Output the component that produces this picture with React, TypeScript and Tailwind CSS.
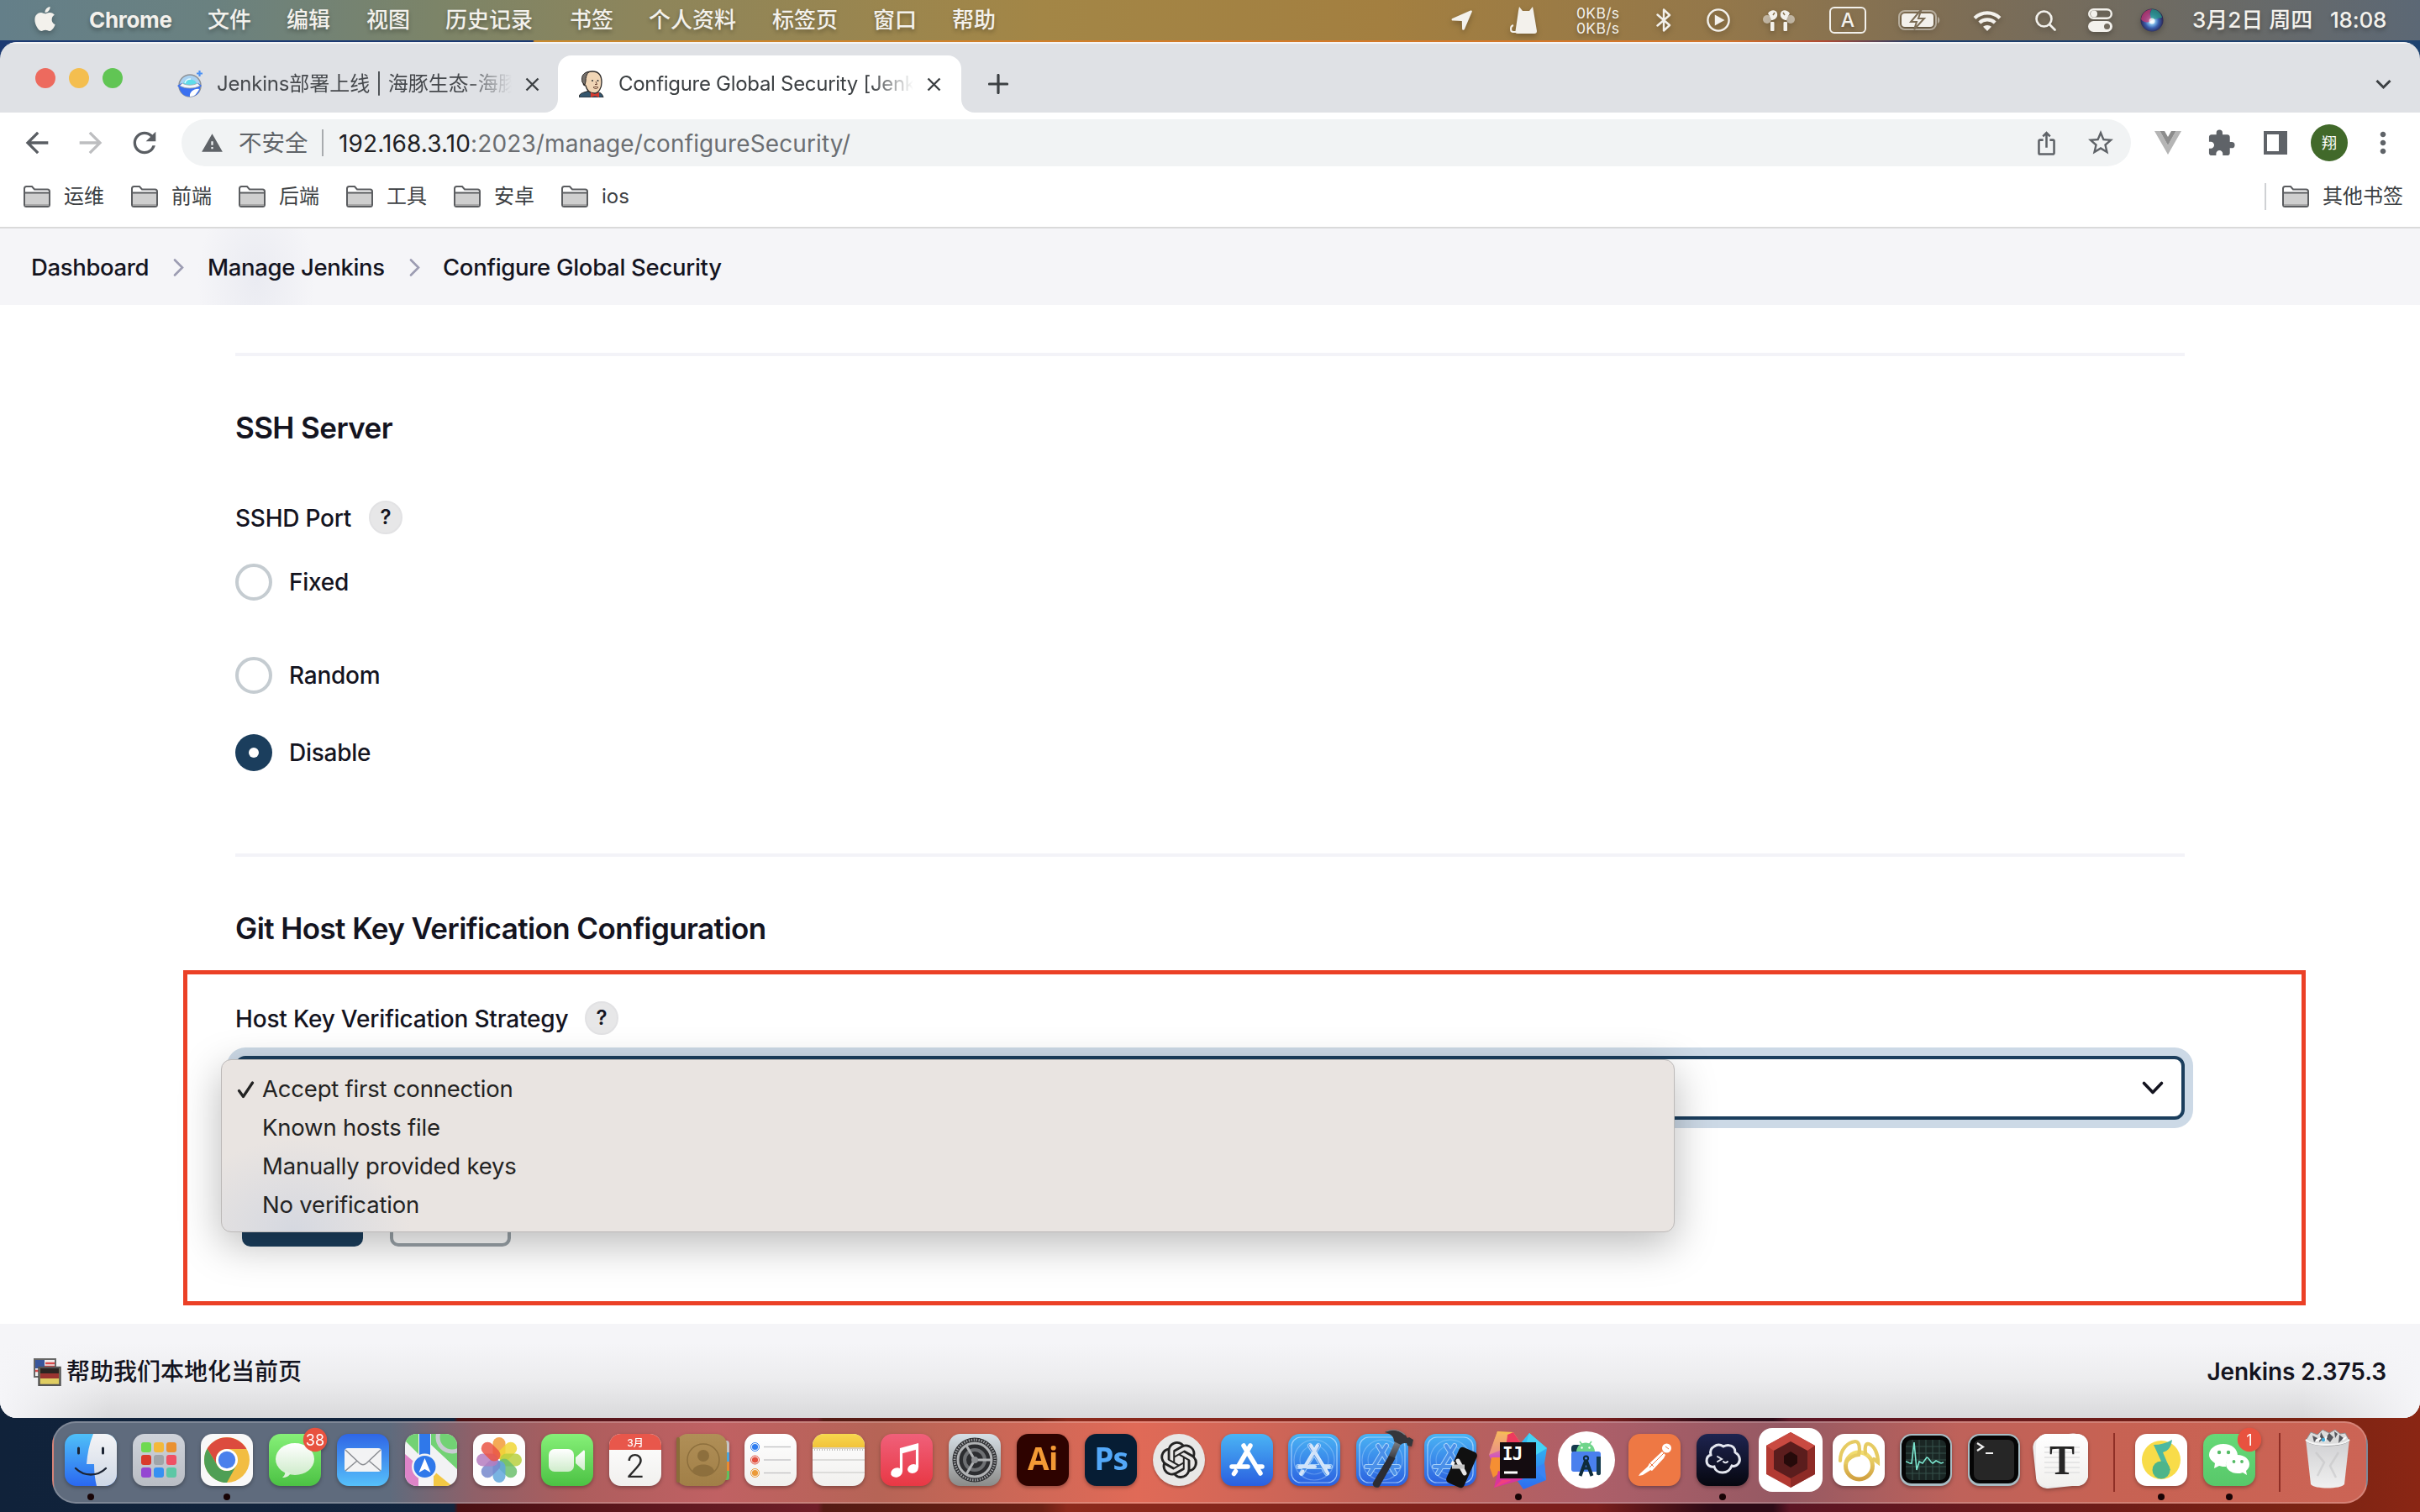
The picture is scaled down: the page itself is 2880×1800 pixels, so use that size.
import React from "react";
import { FaApple } from "react-icons/fa";
import { SiOpenai } from "react-icons/si";
import {
  MdArrowBack,
  MdArrowForward,
  MdExtension,
  MdIosShare,
  MdMoreVert,
  MdRefresh,
  MdStarBorder,
  MdWarning,
} from "react-icons/md";

/* ---------- macOS menu bar ---------- */

const MENUS = [
  { label: "文件", w: "w-[94px]" },
  { label: "编辑", w: "w-[95px]" },
  { label: "视图", w: "w-[94px]" },
  { label: "历史记录", w: "w-[148px]" },
  { label: "书签", w: "w-[94px]" },
  { label: "个人资料", w: "w-[147px]" },
  { label: "标签页", w: "w-[120px]" },
  { label: "窗口", w: "w-[94px]" },
  { label: "帮助", w: "w-[60px]" },
];

function MenuBar() {
  return (
    <div className="flex h-[48px] shrink-0 items-center bg-[linear-gradient(to_right,#647f89_0px,#6a8180_250px,#7c8468_520px,#8c855c_750px,#a38646_1240px,#a37f40_1650px,#93774a_2050px,#7c6d56_2350px,#6a6a66_2640px,#5c6875_2880px)] pl-[37px] pr-[38px] text-[26px] leading-[46px] text-[#f3f1ec] [text-shadow:0_3px_5px_rgba(0,0,0,0.3)]">
      <div className="flex w-[69px] shrink-0">
        <FaApple size={33} className="-mt-1 drop-shadow-[0_3px_3px_rgba(0,0,0,0.25)]" />
      </div>
      <div className="w-[141px] shrink-0 font-bold tracking-[-0.3px]">Chrome</div>
      {MENUS.map((m) => (
        <div key={m.label} className={`${m.w} shrink-0 whitespace-nowrap font-medium`}>
          {m.label}
        </div>
      ))}
      <div className="ml-auto flex items-center [&>svg]:shrink-0 [&>svg]:overflow-visible [&>svg]:drop-shadow-[0_3px_3px_rgba(0,0,0,0.25)]">
        <svg width="25" height="24" viewBox="0 0 25 24" fill="currentColor">
          <path d="M23 .6c1.200-.6 2.200.3 1.800 1.500L15.800 23c-.6 1.300-2.600 1-2.700-.5l-.3-9.600-10.800-.3c-1.600-.1-2-1.900-.6-2.600z" />
        </svg>
        <svg className="ml-[45px]" width="32" height="32" viewBox="0 0 32 32">
          <path d="M11 0l4 5h8l4-5 1 5 4 24c0 2-1 3-3 3H9c-2 0-3-1-2.500-3l3.500-24z" fill="currentColor" />
          <path d="M4 22c-4 1-4 8 0 8h6" stroke="currentColor" strokeWidth="2" fill="none" />
        </svg>
        <div className="ml-[47px] w-[50px] whitespace-nowrap pt-[2px] text-[17.500px] leading-[18px] tracking-[0.300px]">
          <div>0KB/s</div>
          <div>0KB/s</div>
        </div>
        <svg className="ml-[45px]" width="18" height="28" viewBox="0 0 18 28" fill="none" stroke="currentColor" strokeWidth="2.400" strokeLinejoin="round" strokeLinecap="round">
          <path d="M1.500 7.500L16 20 9 26.500V1.500L16 8 1.500 20.500" />
        </svg>
        <svg className="ml-[42px]" width="28" height="28" viewBox="0 0 28 28" fill="none" stroke="currentColor" strokeWidth="2.400">
          <circle cx="14" cy="14" r="12.600" />
          <path d="M11 9.500v9l8-4.500z" fill="currentColor" />
        </svg>
        <svg className="ml-[39px]" width="38" height="25" viewBox="0 0 38 25" fill="currentColor">
          <ellipse cx="5" cy="11" rx="5" ry="5" opacity=".55" />
          <ellipse cx="33" cy="11" rx="5" ry="5" opacity=".55" />
          <path d="M6 4c3-5 10-5 11 0 1 5-3 8-7 8-1-3-2-5-4-8zM32 4c-3-5-10-5-11 0-1 5 3 8 7 8 1-3 2-5 4-8z" />
          <rect x="9" y="14" width="4.500" height="11" rx="1" />
          <rect x="24.500" y="14" width="4.500" height="11" rx="1" />
          <path d="M12 6l2-3M26 6l-2-3" stroke="#8a7450" strokeWidth="1.500" />
        </svg>
        <div className="ml-[41px] flex h-[32px] w-[44px] items-center justify-center rounded-[6px] border-2 border-[#f3f1ec] text-[23px] font-medium leading-none">
          A
        </div>
        <svg className="ml-[38px]" width="50" height="24" viewBox="0 0 50 24">
          <rect x="1" y="1" width="44" height="22" rx="7" fill="none" stroke="currentColor" strokeWidth="2" opacity=".5" />
          <rect x="4" y="4" width="38" height="16" rx="4" fill="currentColor" />
          <path d="M47 8c3 1.500 3 6.500 0 8z" fill="currentColor" opacity=".5" />
          <path d="M26 1L15 14h7l-3 9 12-13h-7l3-9z" fill="currentColor" stroke="#7c6d56" strokeWidth="2" />
        </svg>
        <svg className="ml-[39px]" width="34" height="25" viewBox="0 0 34 25" fill="none" stroke="currentColor" strokeWidth="4.200">
          <path d="M2 9.500a21.500 21.500 0 0 1 30 0" />
          <path d="M7.800 15a13.500 13.500 0 0 1 18.400 0" />
          <path d="M17 25l-5-5.200a7.500 7.500 0 0 1 10 0z" fill="currentColor" stroke="none" />
        </svg>
        <svg className="ml-[40px]" width="25" height="25" viewBox="0 0 25 25" fill="none" stroke="currentColor" strokeWidth="2.600" strokeLinecap="round">
          <circle cx="10.500" cy="10.500" r="9" />
          <path d="M17.500 17.500l6 6" />
        </svg>
        <svg className="ml-[38px]" width="29" height="28" viewBox="0 0 29 28">
          <rect x="1.200" y="1.200" width="26.600" height="10.600" rx="5.300" fill="none" stroke="currentColor" strokeWidth="2.400" />
          <circle cx="7" cy="6.500" r="4" fill="currentColor" />
          <rect y="15" width="29" height="13" rx="6.500" fill="currentColor" />
          <circle cx="22.500" cy="21.500" r="3.500" fill="#736b5e" />
        </svg>
        <svg className="ml-[33px]" width="28" height="28" viewBox="0 0 28 28">
          <defs>
            <radialGradient id="siri" cx=".5" cy=".55">
              <stop offset="0" stopColor="#fff" />
              <stop offset=".3" stopColor="#7fb9e8" />
              <stop offset=".6" stopColor="#3a5fae" />
              <stop offset="1" stopColor="#2a2450" />
            </radialGradient>
          </defs>
          <circle cx="14" cy="14" r="13.500" fill="url(#siri)" />
          <path d="M1 13C2 5 8 1 14 1c-4 4-2 8 0 13-5 4-10 3-13-1z" fill="#c93a72" opacity=".75" />
          <path d="M14 1c6 0 11 4 12 10-4 1-8 1-12 3-2-5-3-9 0-13z" fill="#2a9c8a" opacity=".75" />
          <circle cx="14" cy="15" r="3.500" fill="#fff" opacity=".75" />
        </svg>
        <div className="ml-[34px] w-[146px] whitespace-nowrap text-[26px] font-medium">3月2日 周四</div>
        <div className="ml-[18px] w-[69px] whitespace-nowrap text-[26px] font-medium tracking-[-0.200px]">18:08</div>
      </div>
    </div>
  );
}

/* ---------- Chrome window ---------- */

function CloseX() {
  return (
    <svg width="17" height="17" viewBox="0 0 17 17" stroke="#3c4043" strokeWidth="2.400" className="shrink-0">
      <path d="M1.500 1.500l14 14M15.500 1.500l-14 14" />
    </svg>
  );
}

function TabStrip() {
  return (
    <div className="flex h-[84px] shrink-0 items-end border-t-2 border-[#f4f4f5] bg-[#dfe1e5]">
      <div className="flex h-full w-[211px] shrink-0 items-center gap-[16px] pl-[42px]">
        <div className="size-[24px] rounded-full bg-[#ed6a5e]" />
        <div className="size-[24px] rounded-full bg-[#f4be4f]" />
        <div className="size-[24px] rounded-full bg-[#61c554]" />
      </div>
      <div className="flex h-[68px] w-[453px] shrink-0 items-center">
        <svg width="31" height="32" viewBox="0 0 31 32" className="shrink-0">
          <circle cx="15" cy="18" r="13" fill="#a9d2f2" stroke="#8f9399" strokeWidth="1.500" />
          <path d="M6 17a9.500 9.500 0 0 1 18 0z" fill="#5fdcea" />
          <path d="M9 15c1-4 4-5 7-5" stroke="#e6fbff" strokeWidth="1.500" fill="none" />
          <path d="M0 18l5-3c2 3 6 4 10 4s8-1 10-4l4 3-2 2c0 7-5 11-12 11S4 27 2 20z" fill="#3b70f0" />
          <path d="M6 15l-3 3c6 4 18 4 24 0l-3-3c-5 3-13 3-18 0z" fill="#f4f7fa" stroke="#98a2ac" strokeWidth=".8" />
          <path d="M15 31c-1-5 5-10 11-9-1 3-2 3-3 5-2 3-5 4-8 4z" fill="#fff" />
          <path d="M26.500 0v7M23 3.500h7" stroke="#4d93f5" strokeWidth="2.200" />
        </svg>
        <div className="ml-[16px] w-[351px] shrink-0 overflow-hidden whitespace-nowrap text-[24px] text-[#46494d] [mask-image:linear-gradient(to_right,black_295px,transparent_351px)]">
          <span className="tracking-[-0.200px]">Jenkins</span>部署上线 | 海豚生态-海豚
        </div>
        <div className="ml-[16px] flex">
          <CloseX />
        </div>
      </div>
      <div className="relative flex h-[68px] w-[480px] shrink-0 items-center rounded-t-[16px] bg-white pl-[25px]">
        <svg className="absolute bottom-0 -left-[16px]" width="16" height="16" viewBox="0 0 16 16">
          <path d="M16 0v16H0C9 16 16 9 16 0z" fill="#fff" />
        </svg>
        <svg className="absolute bottom-0 -right-[16px]" width="16" height="16" viewBox="0 0 16 16">
          <path d="M0 0v16h16C7 16 0 9 0 0z" fill="#fff" />
        </svg>
        <svg width="30" height="32" viewBox="0 0 30 32" className="shrink-0">
          <path d="M0 32c0-3 2-5 6-6l6-2 10 2c4 0 6 2 7 6z" fill="#34566e" stroke="#222" strokeWidth="1" />
          <path d="M5 14C3 5 9 1 16 1c8 0 11 6 11 13 0 6-3 13-9 13-7 0-9-5-10-9-2 0-3-2-3-4z" fill="#f0d5b5" stroke="#2e2a28" strokeWidth="1.300" />
          <path d="M4 14C2 6 6 2 12 1.500 9 4 8 8 8 13l-1 4z" fill="#75706b" stroke="#2e2a28" strokeWidth="1" />
          <circle cx="16" cy="12" r="1" fill="#333" />
          <circle cx="22.500" cy="12" r="1" fill="#333" />
          <path d="M20 13l1.500 3.500H19M17 20c2-1 4-1 6 0-2 2-4 2-6 0" stroke="#6b4535" fill="none" strokeWidth="1" />
          <path d="M14 26l5 2 5-2v6l-5-2-5 2z" fill="#d33a30" />
        </svg>
        <div className="ml-[17px] w-[351px] shrink-0 overflow-hidden whitespace-nowrap text-[24px] tracking-[-0.300px] text-[#3c4043] [mask-image:linear-gradient(to_right,black_300px,transparent_351px)]">
          Configure Global Security [Jenkins]
        </div>
        <div className="ml-[16px] flex">
          <CloseX />
        </div>
      </div>
      <div className="flex h-[68px] flex-1 items-center justify-between pl-[32px] pr-[34px]">
        <svg width="24" height="24" viewBox="0 0 24 24" stroke="#3c4043" strokeWidth="3.200" strokeLinecap="round">
          <path d="M12 1.500v21M1.500 12h21" />
        </svg>
        <svg width="19" height="13" viewBox="0 0 19 13" fill="none" stroke="#3c4043" strokeWidth="3">
          <path d="M1.500 2l8 8 8-8" />
        </svg>
      </div>
    </div>
  );
}

function Toolbar() {
  return (
    <div className="flex h-[72px] shrink-0 items-center bg-white pl-[24px]">
      <div className="flex gap-[24px]">
        <MdArrowBack size={40} color="#5a5e63" />
        <MdArrowForward size={40} color="#bdbec0" />
        <MdRefresh size={40} color="#5a5e63" />
      </div>
      <div className="ml-[24px] flex h-[56px] w-[2320px] shrink-0 items-center rounded-full bg-[#f1f3f4] pl-[23px] pr-[18px]">
        <MdWarning size={27} color="#5f6368" />
        <div className="ml-[18px] w-[99px] text-[27.500px] leading-[40px] text-[#5f6368]">不安全</div>
        <div className="h-[32px] w-[2px] bg-[#a8abae]" />
        <div className="ml-[18px] whitespace-nowrap pt-px text-[28px] tracking-[0.120px] text-[#6b6e72]">
          <span className="text-[#202124]">192.168.3.10</span>:2023/manage/configureSecurity/
        </div>
        <MdIosShare size={31} color="#5f6368" className="ml-auto" />
        <MdStarBorder size={36} color="#5f6368" className="ml-[31px]" />
      </div>
      <svg className="ml-[28px]" width="32" height="28" viewBox="0 0 32 28">
        <path d="M0 0h6.500L16 17 25.500 0H32L16 28z" fill="#b5b5b5" />
        <path d="M6.500 0H12l4 7 4-7h5.500L16 17z" fill="#8c8c8c" />
      </svg>
      <MdExtension size={35} color="#5f6368" className="ml-[30px]" />
      <svg className="ml-[33px]" width="28" height="28" viewBox="0 0 28 28">
        <path d="M0 0h28v28H0zM4 4v20h14V4z" fill="#5f6368" fillRule="evenodd" />
      </svg>
      <div className="ml-[28px] flex size-[44px] items-center justify-center rounded-full bg-[#41692a] text-[18px] text-white">
        翔
      </div>
      <MdMoreVert size={40} color="#5f6368" className="ml-[22px]" />
    </div>
  );
}

function Folder() {
  return (
    <svg width="32" height="26" viewBox="0 0 32 26" className="shrink-0">
      <path d="M1 3.500C1 2 2 1 3.500 1H10l3 3.500h15.500C30 4.500 31 5.500 31 7v15.500c0 1.500-1 2.500-2.500 2.500h-25C2 25 1 24 1 22.500z" fill="#fff" stroke="#5b5d60" strokeWidth="2" />
      <path d="M2 9h28v13c0 1-.5 2-2 2H4c-1.500 0-2-1-2-2z" fill="#cfcfcf" />
      <path d="M1 8.500h30" stroke="#5b5d60" strokeWidth="1.800" />
      <path d="M2 22h28v2H2z" fill="#a9a9a9" />
    </svg>
  );
}

function Bookmarks() {
  return (
    <div className="flex h-[66px] shrink-0 items-center border-b-2 border-[#dadada] bg-white pb-[10px] pl-[28px] pr-[20px] text-[24px] leading-[32px] text-[#3c4043]">
      {["运维", "前端", "后端", "工具", "安卓", "ios"].map((b) => (
        <div key={b} className="flex w-[128px] shrink-0 items-center gap-[16px] pt-[2px]">
          <Folder />
          <span className="-mt-px">{b}</span>
        </div>
      ))}
      <div className="ml-auto flex items-center">
        <div className="mt-[2px] h-[32px] w-[2px] bg-[#cfd1d4]" />
        <div className="ml-[19px] flex items-center gap-[16px] whitespace-nowrap pt-[2px]">
          <Folder />
          <span className="-mt-px">其他书签</span>
        </div>
      </div>
    </div>
  );
}

/* ---------- Jenkins page ---------- */

function Crumb() {
  return (
    <svg width="13" height="21" viewBox="0 0 13 21" fill="none" stroke="#9c9cb2" strokeWidth="2.600" className="shrink-0" strokeLinecap="round">
      <path d="M2 1.500l9 9-9 9" />
    </svg>
  );
}

function Breadcrumbs() {
  return (
    <div className="flex h-[91px] shrink-0 items-center bg-[#f5f5f8] bg-[radial-gradient(ellipse_70px_110px_at_305px_60px,rgba(225,227,236,0.550),transparent)] pl-[37px] pt-[2px] text-[27.500px] font-medium text-[#14141f]">
      <div className="w-[169px] whitespace-nowrap tracking-[-0.350px]">Dashboard</div>
      <Crumb />
      <div className="ml-[28px] w-[240px] whitespace-nowrap tracking-[-0.350px]">Manage Jenkins</div>
      <Crumb />
      <div className="ml-[27px] whitespace-nowrap tracking-[-0.300px]">Configure Global Security</div>
    </div>
  );
}

function Help() {
  return (
    <div className="flex size-[40px] items-center justify-center rounded-full border-2 border-[#e2e2e4] bg-[#e7e7e8] text-[24px] font-semibold text-[#14141f]">
      ?
    </div>
  );
}

function Radio({ label, checked, className }: { label: string; checked?: boolean; className: string }) {
  return (
    <div className={`flex h-[44px] items-center gap-[20px] ${className}`}>
      {checked ? (
        <div className="flex size-[44px] items-center justify-center rounded-full bg-[#1b3e5d]">
          <div className="size-[12px] rounded-full bg-white" />
        </div>
      ) : (
        <div className="size-[44px] rounded-full border-4 border-[#c5ccd1] bg-white" />
      )}
      <span className="text-[28px] font-medium tracking-[-0.250px]">{label}</span>
    </div>
  );
}

const OPTIONS = ["Accept first connection", "Known hosts file", "Manually provided keys", "No verification"];

function Page() {
  return (
    <div className="relative flex h-[1213px] shrink-0 flex-col bg-white px-[280px] text-[#14141f]">
      <div className="mt-[57px] h-[4px] shrink-0 bg-[#f3f3f8]" />
      <h2 className="mt-[61px] h-[49px] text-[35px] font-semibold leading-[48px] tracking-[-0.580px]">SSH Server</h2>
      <div className="mt-[62px] flex h-[40px] items-center">
        <div className="w-[159px] whitespace-nowrap pt-[2px] text-[28px] font-medium tracking-[-0.250px]">SSHD Port</div>
        <Help />
      </div>
      <Radio label="Fixed" className="mt-[35px]" />
      <Radio label="Random" className="mt-[67px]" />
      <Radio label="Disable" checked className="mt-[48px]" />
      <div className="mt-[98px] h-[4px] shrink-0 bg-[#f3f3f8]" />
      <h2 className="mt-[61px] h-[49px] text-[35px] font-semibold leading-[48px] tracking-[-0.580px]">
        Git Host Key Verification Configuration
      </h2>
      <div className="mt-[62px] flex h-[40px] items-center">
        <div className="w-[416px] whitespace-nowrap pt-[2px] text-[28px] font-medium tracking-[-0.180px]">
          Host Key Verification Strategy
        </div>
        <Help />
      </div>
      <div className="mt-[25px] flex h-[76px] shrink-0 items-center justify-end rounded-[12px] border-4 border-[#1b3e5d] bg-white pr-[20px] shadow-[0_0_0_10px_#ccd9e6]">
        <svg width="28" height="18" viewBox="0 0 28 18" fill="none" stroke="#14141f" strokeWidth="3.600" strokeLinecap="round" strokeLinejoin="round">
          <path d="M3.500 3.500l10.500 11 10.500-11" />
        </svg>
      </div>
      <div className="mt-[79px] flex gap-[32px] pl-[8px]">
        <div className="h-[72px] w-[144px] rounded-[10px] bg-[#1b3e5d]" />
        <div className="h-[72px] w-[144px] rounded-[10px] border-4 border-[#9aa3a9] bg-white" />
      </div>

      {/* opened option list over the select */}
      <div className="absolute left-[263px] top-[898px] flex h-[206px] w-[1730px] flex-col rounded-[12px] border border-[#bcb9b8] bg-[#e9e4e1] bg-[radial-gradient(ellipse_140px_110px_at_85px_205px,#d5d8e0,transparent)] pl-[18px] pt-[12px] shadow-[0_14px_50px_rgba(0,0,0,0.280)]">
        {OPTIONS.map((o, i) => (
          <div key={o} className="flex h-[46px] items-center text-[27.500px] text-[#232323]">
            <div className="w-[30px]">
              {i === 0 && (
                <svg width="21" height="21" viewBox="0 0 21 21" fill="none" stroke="#232323" strokeWidth="3.200" strokeLinecap="round" strokeLinejoin="round">
                  <path d="M2.500 11.500l5 7L18.500 2" />
                </svg>
              )}
            </div>
            <span className="whitespace-nowrap tracking-[-0.200px]">{o}</span>
          </div>
        ))}
      </div>

      {/* red annotation frame */}
      <div className="absolute left-[218px] top-[792px] h-[399px] w-[2526px] border-[5px] border-[#eb4026]" />
    </div>
  );
}

function Footer() {
  return (
    <div className="flex h-[112px] shrink-0 items-center justify-between bg-[#f5f5f8] bg-[linear-gradient(to_right,#f5f5f8_0px,transparent_130px,transparent_2740px,#f5f5f8_2880px),linear-gradient(to_bottom,#f5f5f8_20%,#ececee_60%,#d9d9db)] pl-[40px] pr-[40px] pt-[2px] text-[28px] text-[#14141f]">
      <div className="flex items-center font-medium">
        <svg width="33" height="33" viewBox="0 0 33 33">
          <rect x="1" y="1" width="25" height="21" fill="#eee" stroke="#666" strokeWidth="2" />
          <path d="M2 10h23M2 15h23M14 6h11" stroke="#d8494a" strokeWidth="2.500" />
          <rect x="2" y="2" width="11" height="10" fill="#39569c" />
          <rect x="6.500" y="11" width="25" height="21" fill="#e0cd62" stroke="#555" strokeWidth="2.500" />
          <path d="M8 12h22v6H8z" fill="#2c2422" />
          <path d="M8 18h22v6H8z" fill="#9a3431" />
        </svg>
        <span className="ml-[6px] whitespace-nowrap">帮助我们本地化当前页</span>
      </div>
      <div className="whitespace-nowrap text-[28px] font-semibold tracking-[-0.100px]">Jenkins 2.375.3</div>
    </div>
  );
}

/* ---------- Dock ---------- */

function Tile({ fill, children }: { fill: string; children?: React.ReactNode }) {
  return (
    <svg width="62" height="62" viewBox="0 0 62 62" className="overflow-visible drop-shadow-[0_2px_2px_rgba(0,0,0,0.300)]">
      <rect width="62" height="62" rx="14" fill={fill} />
      {children}
    </svg>
  );
}

function Gradients() {
  const g: [string, string, string][] = [
    ["gFinder", "#4fc0f8", "#2a68f0"],
    ["gFinder2", "#f4f4f6", "#ced8e6"],
    ["gGreen", "#86f078", "#4cc244"],
    ["gMail", "#2f66e6", "#56c0fa"],
    ["gStore", "#4ab4f4", "#2a5fe0"],
    ["gMusic", "#f0607a", "#e83844"],
    ["gGrey", "#cfd3da", "#b9bdc4"],
    ["gPref", "#d6dfe6", "#8b8b89"],
    ["gWhite", "#ffffff", "#f1f0ee"],
    ["gTerm", "#1e2450", "#06070f"],
    ["gGold", "#f2de70", "#d0a040"],
    ["gNotes", "#f7d84e", "#f2c33a"],
    ["gBubble", "#ffffff", "#cfeccb"],
    ["gContact", "#b08f57", "#a17f47"],
    ["gTrash", "#cfcfd1", "#f0f0f0"],
    ["gWe", "#66d977", "#58c86a"],
    ["gHandle", "#8a8d94", "#26282d"],
    ["gIjPink", "#f9c74a", "#c63bd8"],
    ["gIjBlue", "#35c9f2", "#2d6cf0"],
  ];
  return (
    <svg width="0" height="0" className="absolute">
      <defs>
        {g.map(([id, a, b]) => (
          <linearGradient key={id} id={id} x1="0" y1="0" x2="0" y2="1">
            <stop offset="0" stopColor={a} />
            <stop offset="1" stopColor={b} />
          </linearGradient>
        ))}
        <clipPath id="tile">
          <rect width="62" height="62" rx="14" />
        </clipPath>
      </defs>
    </svg>
  );
}

const STORE_A = "M35 14L21 38M27 14l20 33M13 39h19M42 39h7M17.500 44.500l-2 3";

function StoreA({ width = 5.5, opacity = 1 }: { width?: number; opacity?: number }) {
  return <path d={STORE_A} stroke="#fff" strokeWidth={width} strokeLinecap="round" fill="none" opacity={opacity} />;
}

function OutlineA() {
  return (
    <g strokeLinecap="round" fill="none">
      <path d="M36 14L16 47M26 14l20 33M12 39h38" stroke="#a9d3fa" strokeWidth="6" />
      <path d="M36 14L16 47M26 14l20 33M12 39h38" stroke="#4a8fe8" strokeWidth="4" />
    </g>
  );
}

function Blueprint() {
  return (
    <g fill="none" stroke="#bfe0ff" strokeWidth="1.200" opacity=".75">
      <rect x="4" y="4" width="54" height="54" rx="11" />
      <circle cx="31" cy="31" r="24" opacity=".5" />
      <circle cx="31" cy="31" r="17" opacity=".4" />
    </g>
  );
}

const PADS = ["#6fd951", "#f3b93a", "#ea9130", "#d93a2c", "#9fa4a8", "#ef5064", "#9446d2", "#3590f2", "#5cc7a5"];
const PETALS = ["#f29b38", "#f0d636", "#b9d03f", "#6cc06c", "#62a7dc", "#7688cc", "#b57cc0", "#ea5545"];

function Badge({ x, text }: { x: number; text: string }) {
  return (
    <g>
      <circle cx={x} cy="7" r="14.200" fill="#e8523f" />
      <text x={x} y="13.500" fontSize="18" fill="#fff" textAnchor="middle" fontFamily="Inter">
        {text}
      </text>
    </g>
  );
}

const DOCK: { id: string; running?: boolean; icon: React.ReactNode }[] = [
  {
    id: "finder",
    running: true,
    icon: (
      <Tile fill="url(#gFinder)">
        <g clipPath="url(#tile)">
          <path d="M34 0C29 12 27 24 26 36h9c0 10 1 18 3 26h24V0z" fill="url(#gFinder2)" />
        </g>
        <path d="M16.500 17v6M45.500 17v6" stroke="#1c2433" strokeWidth="3" strokeLinecap="round" />
        <path d="M13 41c10 10 26 10 36 0" stroke="#1c2433" strokeWidth="2.400" fill="none" strokeLinecap="round" />
      </Tile>
    ),
  },
  {
    id: "launchpad",
    icon: (
      <Tile fill="url(#gGrey)">
        {PADS.map((c, i) => (
          <rect key={c} x={10 + (i % 3) * 15} y={10 + Math.floor(i / 3) * 15} width="12" height="12" rx="3" fill={c} />
        ))}
      </Tile>
    ),
  },
  {
    id: "chrome",
    running: true,
    icon: (
      <Tile fill="#f8f8f8">
        <circle cx="31" cy="31" r="27" fill="#f2bd42" />
        <path d="M31 18H54.400A27 27 0 0 0 7.600 17.500L19.700 37.500A13 13 0 0 1 31 18z" fill="#dc4b3e" />
        <path d="M7.600 17.500A27 27 0 0 0 31 58L42.300 37.500a13 13 0 0 1-22.600 0z" fill="#4f9f55" />
        <circle cx="31" cy="31" r="13" fill="#fff" />
        <circle cx="31" cy="31" r="10.200" fill="#4a80ec" />
      </Tile>
    ),
  },
  {
    id: "messages",
    icon: (
      <Tile fill="url(#gGreen)">
        <ellipse cx="31" cy="30" rx="23" ry="19" fill="url(#gBubble)" />
        <path d="M19 44c1 4-1 6-3 8 5 0 8-2 10-5z" fill="#dff2dc" />
        <Badge x={55} text="38" />
      </Tile>
    ),
  },
  {
    id: "mail",
    icon: (
      <Tile fill="url(#gMail)">
        <rect x="9" y="17" width="44" height="28" rx="4" fill="#f3f3f4" />
        <path d="M10 19l17 16c3 2.500 5 2.500 8 0l17-16M10 44l14-12M52 44L38 32" stroke="#8b8d92" strokeWidth="1.500" fill="none" />
      </Tile>
    ),
  },
  {
    id: "maps",
    icon: (
      <Tile fill="#f2f2f4">
        <g clipPath="url(#tile)">
          <path d="M0 0h16v24L0 8zM30 0h32v42L30 12z" fill="#72d274" />
          <path d="M16 0h15v62H16z" fill="#f5f5f7" />
          <path d="M17 0h13v40H17z" fill="#2f78ea" />
          <path d="M0 24l16 14v24H0z" fill="#dd84c8" />
          <path d="M34 44l22 18H34z" fill="#f3c844" />
          <circle cx="56" cy="4" r="17" fill="none" stroke="#c9ccd2" strokeWidth="5" />
        </g>
        <circle cx="23.500" cy="39" r="15.500" fill="#f3f3f5" />
        <circle cx="23.500" cy="39" r="13" fill="#2f78ea" />
        <path d="M23.500 29l7 17-7-4-7 4z" fill="#fff" />
      </Tile>
    ),
  },
  {
    id: "photos",
    icon: (
      <Tile fill="#fdfdfd">
        {PETALS.map((c, i) => (
          <rect key={c} x="23.500" y="4" width="15" height="26" rx="7.500" fill={c} opacity=".85" transform={`rotate(${i * 45} 31 31)`} />
        ))}
      </Tile>
    ),
  },
  {
    id: "facetime",
    icon: (
      <Tile fill="url(#gGreen)">
        <rect x="9" y="18" width="30" height="27" rx="7" fill="url(#gBubble)" />
        <path d="M41 28l9-8c1-1 2 0 2 1v21c0 1-1 2-2 1l-9-8z" fill="url(#gBubble)" />
      </Tile>
    ),
  },
  {
    id: "calendar",
    icon: (
      <Tile fill="url(#gWhite)">
        <path d="M0 19V14A14 14 0 0 1 14 0h34a14 14 0 0 1 14 14v5z" fill="#e8574b" />
        <text x="31" y="14.500" fontSize="12" fill="#fff" textAnchor="middle" fontWeight="500">
          3月
        </text>
        <text x="31" y="52" fontSize="38" fill="#2a2a2a" textAnchor="middle" fontFamily="Inter" fontWeight="300">
          2
        </text>
      </Tile>
    ),
  },
  {
    id: "contacts",
    icon: (
      <Tile fill="none">
        <path d="M56 8h4c2 0 3 2 3 4v10h-7z" fill="#c4c4c4" />
        <path d="M56 22h7v11h-7z" fill="#4aa5dc" />
        <path d="M56 33h7v11h-7z" fill="#e98a30" />
        <path d="M56 44h7v8c0 2-1 3-3 3h-4z" fill="#62c05c" />
        <rect width="60" height="62" rx="13" fill="url(#gContact)" />
        <rect x="0" width="4" height="54" y="4" rx="2" fill="#8a6c3a" />
        <circle cx="32" cy="31" r="19" fill="none" stroke="#8d6f3d" strokeWidth="1.500" />
        <circle cx="32" cy="26" r="7" fill="#8d6f3d" />
        <path d="M19 44c3-10 23-10 26 0-6 8-20 8-26 0z" fill="#8d6f3d" />
      </Tile>
    ),
  },
  {
    id: "reminders",
    icon: (
      <Tile fill="url(#gWhite)">
        {["#2f7df0", "#e2503f", "#eb9a38"].map((c, i) => (
          <g key={c}>
            <circle cx="12.500" cy={15.5 + i * 15.5} r="5" fill="none" stroke={c} strokeWidth="1" />
            <circle cx="12.500" cy={15.5 + i * 15.5} r="3.600" fill={c} />
            <path d={`M23 ${15.5 + i * 15.5}h32`} stroke="#c2c2c4" strokeWidth="1.300" />
          </g>
        ))}
      </Tile>
    ),
  },
  {
    id: "notes",
    icon: (
      <Tile fill="url(#gWhite)">
        <path d="M0 16v-2A14 14 0 0 1 14 0h34a14 14 0 0 1 14 14v2z" fill="url(#gNotes)" />
        <path d="M0 17h62" stroke="#b8a88a" strokeWidth="1" />
        <path d="M2 19h58" stroke="#aaa" strokeWidth="1.500" strokeDasharray="1 2" />
        <path d="M0 31h62M0 46h62" stroke="#d4d4d2" strokeWidth="1.500" />
      </Tile>
    ),
  },
  {
    id: "music",
    icon: (
      <Tile fill="url(#gMusic)">
        <path d="M23 17l22-6v7l-22 6z" fill="#fff" />
        <path d="M24.500 17v28M43.500 12v28" stroke="#fff" strokeWidth="3.200" />
        <ellipse cx="19" cy="46" rx="7" ry="5.500" fill="#fff" transform="rotate(-20 19 46)" />
        <ellipse cx="38.500" cy="41.500" rx="6.500" ry="5.300" fill="#fff" transform="rotate(-20 38.500 41.500)" />
      </Tile>
    ),
  },
  {
    id: "settings",
    icon: (
      <Tile fill="url(#gPref)">
        <circle cx="31" cy="31" r="26.500" fill="#2c2d30" />
        <circle cx="31" cy="31" r="24" fill="none" stroke="#9b9da0" strokeWidth="3" strokeDasharray="1.500 1.500" />
        <circle cx="31" cy="31" r="20" fill="none" stroke="#b0b2b4" strokeWidth="3" />
        <circle cx="31" cy="31" r="12" fill="none" stroke="#6d6f72" strokeWidth="4" />
        <path d="M31 31h20M31 31L21 14M31 31L21 48" stroke="#b0b2b4" strokeWidth="3" />
        <circle cx="31" cy="31" r="4" fill="#8e9093" />
      </Tile>
    ),
  },
  {
    id: "illustrator",
    icon: (
      <Tile fill="#2e0300">
        <text x="31" y="43" fontSize="37" fill="#f39a35" textAnchor="middle" fontFamily="Open Sans" fontWeight="700" letterSpacing="-0.5">
          Ai
        </text>
      </Tile>
    ),
  },
  {
    id: "photoshop",
    icon: (
      <Tile fill="#061d34">
        <text x="31" y="43" fontSize="37" fill="#53a8f8" textAnchor="middle" fontFamily="Open Sans" fontWeight="700" letterSpacing="-1">
          Ps
        </text>
      </Tile>
    ),
  },
  {
    id: "chatgpt",
    icon: (
      <div className="flex size-[62px] items-center justify-center rounded-full bg-[#e8e7e6] shadow-[0_2px_3px_rgba(0,0,0,0.250)]">
        <SiOpenai size={44} color="#232323" />
      </div>
    ),
  },
  {
    id: "appstore",
    icon: (
      <Tile fill="url(#gStore)">
        <StoreA />
      </Tile>
    ),
  },
  {
    id: "appdev",
    icon: (
      <Tile fill="url(#gStore)">
        <Blueprint />
        <OutlineA />
        <StoreA width={4} opacity={0.75} />
      </Tile>
    ),
  },
  {
    id: "xcode",
    icon: (
      <Tile fill="url(#gStore)">
        <Blueprint />
        <OutlineA />
        <path d="M48 2l7 3-12 27-7-3z" fill="url(#gHandle)" transform="translate(0 3)" />
        <path d="M39 26l7.500 3L28 62c-1.500 4-10 1-8-4z" fill="#2b2d34" />
        <path d="M34-2c8-4 18-3 25 4l2 3 2-1 5 3-2 8-5-1-1-3c-3 0-5 0-7 2l-8-4c0-6-4-9-11-11z" fill="#34363b" />
        <path d="M36-3c7-3 15-2 22 4" stroke="#7d8087" strokeWidth="1.200" fill="none" />
      </Tile>
    ),
  },
  {
    id: "simulator",
    icon: (
      <Tile fill="url(#gStore)">
        <Blueprint />
        <OutlineA />
        <rect x="33" y="17" width="23" height="46" rx="4.500" fill="#101010" transform="rotate(24 44.500 40)" />
        <path d="M40 32l8 15" stroke="#e6e6e6" strokeWidth="5" strokeLinecap="round" />
        <path d="M33 39h15" stroke="#c4c4c4" strokeWidth="5" />
        <path d="M35 33l-2 4" stroke="#f4f4f4" strokeWidth="4" />
      </Tile>
    ),
  },
  {
    id: "intellij",
    running: true,
    icon: (
      <svg width="70" height="70" viewBox="0 0 70 70" className="overflow-visible">
        <path d="M10 1l19 1 8 12-5 24H4l-4-9z" fill="url(#gIjPink)" />
        <path d="M22 5l7-3 8 12-5 10-12-4z" fill="#ee3a5e" />
        <path d="M10 1l12 4-2 16L0 29z" fill="#f7b06a" opacity=".6" />
        <path d="M48 3l21 18-3 18 2 20-27 11-10-14 6-40z" fill="url(#gIjBlue)" />
        <path d="M48 3l21 18-13 8-12-13z" fill="#45d3f4" />
        <path d="M66 39l2 20-14-14z" fill="#3a84f2" />
        <path d="M3 32l10 0 6 14-14 10-4-12z" fill="#f58f33" />
        <path d="M6 68l5-20 30 10z" fill="#d8359c" />
        <path d="M6 68l9-9h12z" fill="#f0417e" />
        <rect x="13" y="14" width="43" height="43" fill="#140c10" />
        <text x="16" y="35" fontSize="21" fill="#fff" fontFamily="DejaVu Sans Mono" fontWeight="700" letterSpacing="-0.8">
          IJ
        </text>
        <path d="M18 50h16" stroke="#fff" strokeWidth="3" />
      </svg>
    ),
  },
  {
    id: "androidstudio",
    icon: (
      <svg width="68" height="68" viewBox="0 0 68 68">
        <circle cx="34" cy="34" r="34" fill="#fff" />
        <rect x="16" y="16" width="12" height="10" rx="4" fill="#153a4e" />
        <rect x="16" y="24" width="35" height="24" rx="3" fill="#4a80ee" />
        <path d="M46 30h5v20c0 3-5 3-5 0z" fill="#153a4e" />
        <path d="M22 24c1-14 21-14 22 0z" fill="#6fd58b" />
        <path d="M26 12l3 4M40 12l-3 4" stroke="#6fd58b" strokeWidth="1.600" />
        <circle cx="28.500" cy="19.500" r="1.200" fill="#fff" />
        <circle cx="37.500" cy="19.500" r="1.200" fill="#fff" />
        <path d="M33.500 34L26.500 53M33.500 34L40.500 53" stroke="#0f2c3c" strokeWidth="4" />
        <path d="M28 44h11" stroke="#0f2c3c" strokeWidth="3" />
        <circle cx="33.500" cy="32" r="2.600" fill="#4a80ee" stroke="#0f2c3c" strokeWidth="2" />
      </svg>
    ),
  },
  {
    id: "postman",
    icon: (
      <Tile fill="#ee7844">
        <circle cx="45.500" cy="17" r="5.500" fill="#fff" />
        <path d="M40 21l4 4-2 4-14 15-6-3 3-6z" fill="#fff" />
        <path d="M24 38l4 4-11 7-5 1 2-3z" fill="#fff" />
        <path d="M42 23L25 40M24 33l6 6" stroke="#ee7844" strokeWidth="1" />
        <path d="M44 15l4 3" stroke="#ee7844" strokeWidth="1" />
      </Tile>
    ),
  },
  {
    id: "termius",
    running: true,
    icon: (
      <Tile fill="url(#gTerm)">
        <path d="M20 16c4-3 8-2 11 0 4-2 9-2 12 1 2 2 2 4 2 6 5 3 7 9 4 13-2 3-5 4-8 3-2 5-6 8-11 8s-9-3-10-7c-5 1-9-2-9-7 0-3 2-6 5-7-1-4 0-8 4-10z" fill="none" stroke="#e4e7f0" strokeWidth="3" transform="translate(1 -1)" />
        <path d="M25 27l5 3-5 3M32 33c1.500 1.500 3.500 1.500 5 0" stroke="#e4e7f0" strokeWidth="2" fill="none" strokeLinecap="round" />
      </Tile>
    ),
  },
  {
    id: "rubyhex",
    icon: (
      <svg width="76" height="76" viewBox="0 0 76 76" className="shrink-0">
        <rect width="76" height="76" rx="16" fill="#fff" />
        <path d="M38 5l29 16v34L38 71 9 55V21z" fill="#b23a32" />
        <path d="M38 5l29 16-9 6-20-11-20 11-9-6z" fill="#c94a41" />
        <path d="M67 21v34L38 71V59l20-11V27z" fill="#8e2b26" />
        <path d="M38 16l20 11v22L38 60 18 49V27z" fill="#5b1d1d" />
        <path d="M38 28l8 5v9l-8 5-8-5v-9z" fill="#260a0a" />
      </svg>
    ),
  },
  {
    id: "navicat",
    icon: (
      <Tile fill="#fff">
        <circle cx="31.500" cy="38" r="16" fill="none" stroke="url(#gGold)" strokeWidth="5" />
        <path d="M9 32C9 18 18 10 27 9c5 0 6 9 4 16-9 1-13 6-15 9M39 23c-1-7 0-12 4-11 7 2 11 12 11 22l-5-4" fill="none" stroke="#e6cb62" strokeWidth="4.200" strokeLinecap="round" />
      </Tile>
    ),
  },
  {
    id: "activity",
    icon: (
      <Tile fill="#a9bdc4">
        <rect x="2" y="2" width="58" height="57" rx="12" fill="#050505" />
        <rect x="7" y="7" width="48" height="48" rx="7" fill="#1a2624" />
        <path d="M15 7v48M23 7v48M31 7v48M39 7v48M47 7v48M7 15h48M7 23h48M7 31h48M7 39h48M7 47h48" stroke="#35504a" strokeWidth="1" />
        <path d="M7 33c3 0 4 3 7 2l3-25 3 33 3-10 4 2 5-7c3 0 4 6 7 7l4-3 6 3 3-1" stroke="#7be6cf" strokeWidth="1.600" fill="none" />
      </Tile>
    ),
  },
  {
    id: "terminal",
    icon: (
      <Tile fill="#a9bdc4">
        <rect x="2" y="2" width="58" height="57" rx="12" fill="#050505" />
        <rect x="7" y="7" width="48" height="48" rx="7" fill="#262626" />
        <path d="M11 11l7 4.500-7 4.500M21 23h9" stroke="#f0f0f0" strokeWidth="2.200" fill="none" />
      </Tile>
    ),
  },
  {
    id: "typora",
    icon: (
      <Tile fill="url(#gWhite)">
        <rect width="62" height="62" rx="13" fill="#ececec" transform="rotate(-6 31 31) translate(-2 1)" />
        <rect width="62" height="62" rx="13" fill="url(#gWhite)" />
        <path d="M10 16h42M10 22h42M10 28h42M10 34h42M10 40h42M10 46h42" stroke="#e6e6e6" strokeWidth="2" />
        <text x="31" y="48" fontSize="50" fill="#262626" textAnchor="middle" fontFamily="Liberation Serif" fontWeight="700" textLength="30" lengthAdjust="spacingAndGlyphs">
          T
        </text>
      </Tile>
    ),
  },
];

const DOCK_RECENT: typeof DOCK = [
  {
    id: "qqmusic",
    running: true,
    icon: (
      <Tile fill="#fff">
        <circle cx="31" cy="31" r="23" fill="#f8dc49" />
        <path d="M22 13c8 0 15-2 22-6-1 8-4 13-11 15l9 21-4 2-5-8z" fill="#4cb8a0" />
        <circle cx="31" cy="43" r="10.500" fill="#4eb58a" />
      </Tile>
    ),
  },
  {
    id: "wechat",
    running: true,
    icon: (
      <Tile fill="url(#gWe)">
        <path d="M24 12c10 0 17 6 17 14-9 0-15 6-14 13-3 0-5 0-8-1l-6 3 1-6c-4-3-7-6-7-10 0-7 7-13 17-13z" fill="#fff" />
        <path d="M41 25c8 0 14 5 14 11 0 4-2 6-4 8l1 5-5-3c-2 1-4 1-6 1-8 0-14-5-14-11s6-11 14-11z" fill="#fff" />
        <circle cx="19" cy="22" r="2.200" fill="#55bb66" />
        <circle cx="30" cy="22" r="2.200" fill="#55bb66" />
        <circle cx="36.500" cy="33" r="1.900" fill="#55bb66" />
        <circle cx="46" cy="33" r="1.900" fill="#55bb66" />
        <Badge x={55} text="1" />
      </Tile>
    ),
  },
];

function DockItem({ icon, running }: { icon: React.ReactNode; running?: boolean }) {
  return (
    <div className="flex w-[80.900px] shrink-0 flex-col items-center">
      <div className="flex h-[88px] items-center justify-center">{icon}</div>
      {running && <div className="-mt-[4px] size-[8px] rounded-full bg-[#180406]" />}
    </div>
  );
}

function Dock() {
  return (
    <div className="ml-[62px] mt-[4px] flex h-[98px] w-[2756px] shrink-0 rounded-[28px] border-2 border-white/20 bg-[linear-gradient(to_right,#5f6b7d_0px,#5f6b7d_400px,#8f6068_500px,#ad5d5d_620px,#c06163_790px,#b66456_980px,#e06a57_1290px,#bf6157_1590px,#ad5f69_1830px,#955963_2060px,#bf625a_2270px,#c76253_2450px,#cc6455_2756px)] pl-[4px]">
      <Gradients />
      {DOCK.map((d) => (
        <DockItem key={d.id} icon={d.icon} running={d.running} />
      ))}
      <div className="ml-[20px] mt-[12px] h-[70px] w-[2px] bg-[#8f2f26]" />
      <div className="w-[15px]" />
      {DOCK_RECENT.map((d) => (
        <DockItem key={d.id} icon={d.icon} running={d.running} />
      ))}
      <div className="ml-[18px] mt-[12px] h-[70px] w-[2px] bg-[#8f2f26]" />
      <svg width="56" height="72" viewBox="0 0 56 72" className="ml-[28px] mt-[7px] shrink-0">
        <path d="M2 12h52l-6 54c-4 6-36 6-40 0z" fill="url(#gTrash)" />
        <path d="M2 14L8 4l8 3 6-6 8 4 7-4 6 5 6-1 5 9c-8 8-44 8-52 0z" fill="#dcdcdc" stroke="#8e8e90" strokeWidth="1" />
        <path d="M10 8l6 3-4 5zM20 4l4 7-6 5zM30 5l5 5-4 6-5-5zM42 7l5 4-6 6zM36 3l4 3-3 5z" fill="#55565c" />
        <path d="M14 14l6-3M24 15l3-6M46 13l4-3" stroke="#fff" strokeWidth="2" />
        <circle cx="23" cy="13" r="2.200" fill="#3fa9d8" />
        <path d="M2 13c8 8 44 8 52 0" stroke="#f6f6f6" strokeWidth="2" fill="none" />
        <path d="M14 28l10 12-8 16M41 28L31 44l7 14" stroke="#c0c0c2" strokeWidth="2.500" fill="none" opacity=".5" />
      </svg>
    </div>
  );
}

export default function App() {
  return (
    <div className="flex h-[1800px] w-[2880px] flex-col overflow-hidden font-[Inter,'Noto_Sans_CJK_SC',sans-serif] [background:linear-gradient(to_right,#1c3a72_0px,#1c3a72_634px,#c98a2e_636px,#d47a28_1500px,#d4762c_2050px,#b04a34_2170px,#1f3f6c_2280px,#1d4270_2880px)_top/100%_900px_no-repeat,linear-gradient(to_right,#10223a_0px,#12243d_540px,#4a0f12_545px,#6e1e28_973px,#541a13_980px,#6a2014_1240px,#8c2a1c_1270px,#7a1e1c_1900px,#2c0a16_2040px,#2c0a16_2110px,#5c1524_2130px,#6e1c18_2500px,#7c2413_2760px,#8a2614_2880px)_bottom/100%_900px_no-repeat]">
      <MenuBar />
      <div className="mt-[2px] flex h-[1638px] shrink-0 flex-col overflow-hidden rounded-[20px]">
        <TabStrip />
        <Toolbar />
        <Bookmarks />
        <Breadcrumbs />
        <Page />
        <Footer />
      </div>
      <Dock />
    </div>
  );
}
